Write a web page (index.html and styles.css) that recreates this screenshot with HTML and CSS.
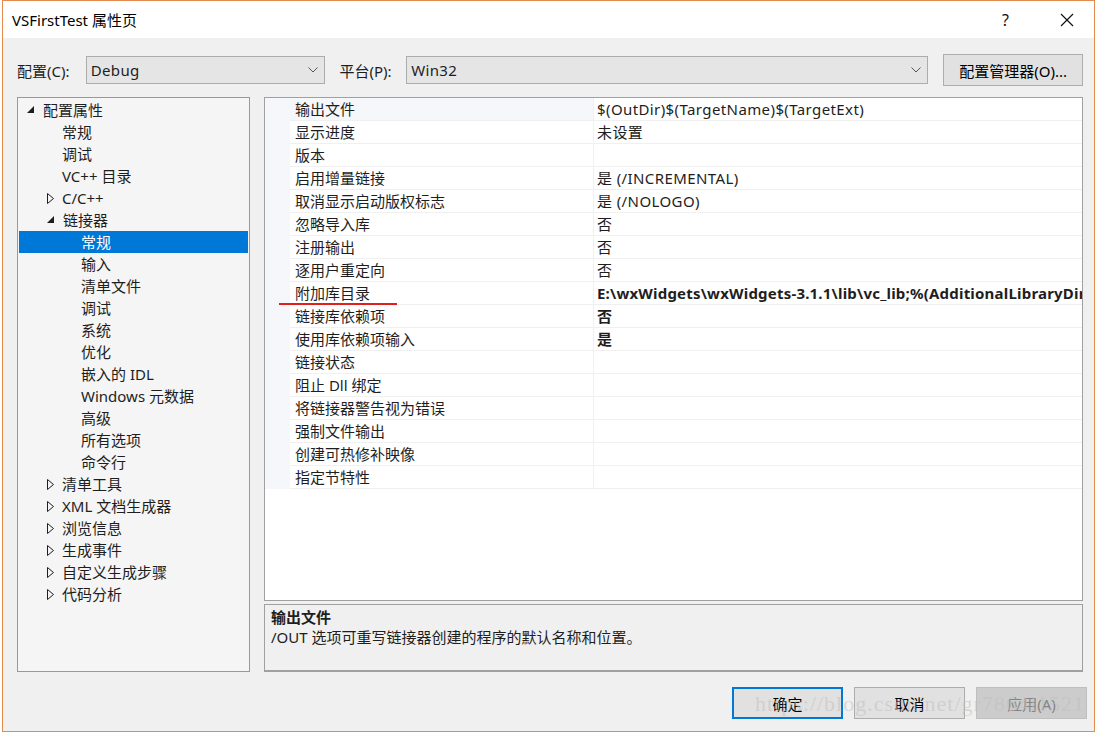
FILE: index.html
```html
<!DOCTYPE html>
<html lang="zh-CN">
<head>
  <meta charset="UTF-8">
  <title>VSFirstTest 属性页</title>
  <link rel="stylesheet" href="styles.css">
</head>
<body>
  <div class="window">
    <!-- Title bar -->
    <div class="titlebar">
      <span class="title">VSFirstTest 属性页</span>
      <span class="help">?</span>
      <span class="close">
        <svg width="14" height="14" viewBox="0 0 14 14"><path d="M1 1L13 13M13 1L1 13" stroke="#111" stroke-width="1.2" fill="none"/></svg>
      </span>
    </div>

    <div class="content">
      <!-- Configuration / platform -->
      <div class="toolbar">
        <span class="lbl lbl-config">配置(C):</span>
        <div class="combo combo-config">
          <span>Debug</span>
          <svg class="chev" width="10" height="6" viewBox="0 0 10 6"><path d="M0.5 0.5L5 5L9.5 0.5" stroke="#555" fill="none"/></svg>
        </div>
        <span class="lbl lbl-platform">平台(P):</span>
        <div class="combo combo-platform">
          <span>Win32</span>
          <svg class="chev" width="10" height="6" viewBox="0 0 10 6"><path d="M0.5 0.5L5 5L9.5 0.5" stroke="#555" fill="none"/></svg>
        </div>
        <button class="btn btn-manager">配置管理器(O)...</button>
      </div>

      <div class="main">
        <!-- Tree -->
        <div class="tree">
          <div class="node lvl0"><svg class="exp" width="8" height="8" viewBox="0 0 8 8"><path d="M7 0V7H0Z" fill="#1e1e1e"/></svg>配置属性</div>
          <div class="node lvl1">常规</div>
          <div class="node lvl1">调试</div>
          <div class="node lvl1">VC++ 目录</div>
          <div class="node lvl1 hasarrow"><svg class="col" width="8" height="11" viewBox="0 0 8 11"><path d="M0.5 0.5L6.5 5.5L0.5 10.5Z" stroke="#1e1e1e" fill="none"/></svg>C/C++</div>
          <div class="node lvl1 hasarrow"><svg class="exp" width="8" height="8" viewBox="0 0 8 8"><path d="M7 0V7H0Z" fill="#1e1e1e"/></svg>链接器</div>
          <div class="node lvl2 selected">常规</div>
          <div class="node lvl2">输入</div>
          <div class="node lvl2">清单文件</div>
          <div class="node lvl2">调试</div>
          <div class="node lvl2">系统</div>
          <div class="node lvl2">优化</div>
          <div class="node lvl2">嵌入的 IDL</div>
          <div class="node lvl2">Windows 元数据</div>
          <div class="node lvl2">高级</div>
          <div class="node lvl2">所有选项</div>
          <div class="node lvl2">命令行</div>
          <div class="node lvl1 hasarrow"><svg class="col" width="8" height="11" viewBox="0 0 8 11"><path d="M0.5 0.5L6.5 5.5L0.5 10.5Z" stroke="#1e1e1e" fill="none"/></svg>清单工具</div>
          <div class="node lvl1 hasarrow"><svg class="col" width="8" height="11" viewBox="0 0 8 11"><path d="M0.5 0.5L6.5 5.5L0.5 10.5Z" stroke="#1e1e1e" fill="none"/></svg>XML 文档生成器</div>
          <div class="node lvl1 hasarrow"><svg class="col" width="8" height="11" viewBox="0 0 8 11"><path d="M0.5 0.5L6.5 5.5L0.5 10.5Z" stroke="#1e1e1e" fill="none"/></svg>浏览信息</div>
          <div class="node lvl1 hasarrow"><svg class="col" width="8" height="11" viewBox="0 0 8 11"><path d="M0.5 0.5L6.5 5.5L0.5 10.5Z" stroke="#1e1e1e" fill="none"/></svg>生成事件</div>
          <div class="node lvl1 hasarrow"><svg class="col" width="8" height="11" viewBox="0 0 8 11"><path d="M0.5 0.5L6.5 5.5L0.5 10.5Z" stroke="#1e1e1e" fill="none"/></svg>自定义生成步骤</div>
          <div class="node lvl1 hasarrow"><svg class="col" width="8" height="11" viewBox="0 0 8 11"><path d="M0.5 0.5L6.5 5.5L0.5 10.5Z" stroke="#1e1e1e" fill="none"/></svg>代码分析</div>
        </div>

        <div class="right">
          <!-- Property grid -->
          <div class="grid">
            <div class="row first"><span class="gutter"></span><span class="name">输出文件</span><span class="val">$(OutDir)$(TargetName)$(TargetExt)</span></div>
            <div class="row"><span class="gutter"></span><span class="name">显示进度</span><span class="val">未设置</span></div>
            <div class="row"><span class="gutter"></span><span class="name">版本</span><span class="val"></span></div>
            <div class="row"><span class="gutter"></span><span class="name">启用增量链接</span><span class="val">是 (/INCREMENTAL)</span></div>
            <div class="row"><span class="gutter"></span><span class="name">取消显示启动版权标志</span><span class="val">是 (/NOLOGO)</span></div>
            <div class="row"><span class="gutter"></span><span class="name">忽略导入库</span><span class="val">否</span></div>
            <div class="row"><span class="gutter"></span><span class="name">注册输出</span><span class="val">否</span></div>
            <div class="row"><span class="gutter"></span><span class="name">逐用户重定向</span><span class="val">否</span></div>
            <div class="row"><span class="gutter"></span><span class="name marked">附加库目录</span><span class="val bold">E:\wxWidgets\wxWidgets-3.1.1\lib\vc_lib;%(AdditionalLibraryDirectories)</span></div>
            <div class="row"><span class="gutter"></span><span class="name">链接库依赖项</span><span class="val bold">否</span></div>
            <div class="row"><span class="gutter"></span><span class="name">使用库依赖项输入</span><span class="val bold">是</span></div>
            <div class="row"><span class="gutter"></span><span class="name">链接状态</span><span class="val"></span></div>
            <div class="row"><span class="gutter"></span><span class="name">阻止 Dll 绑定</span><span class="val"></span></div>
            <div class="row"><span class="gutter"></span><span class="name">将链接器警告视为错误</span><span class="val"></span></div>
            <div class="row"><span class="gutter"></span><span class="name">强制文件输出</span><span class="val"></span></div>
            <div class="row"><span class="gutter"></span><span class="name">创建可热修补映像</span><span class="val"></span></div>
            <div class="row"><span class="gutter"></span><span class="name">指定节特性</span><span class="val"></span></div>
          </div>

          <!-- Description -->
          <div class="desc">
            <div class="desc-title">输出文件</div>
            <div class="desc-text">/OUT 选项可重写链接器创建的程序的默认名称和位置。</div>
          </div>
        </div>
      </div>

      <div class="footer">
        <button class="btn btn-ok">确定</button>
        <button class="btn">取消</button>
        <button class="btn btn-disabled">应用(A)</button>
        <span class="watermark">https://blog.csdn.net/gr7864l1521</span>
      </div>
    </div>
  </div>
</body>
</html>
```

FILE: styles.css
```css
body {
  margin: 0;
  background: #ffffff;
  font-family: "Noto Sans", "Noto Sans CJK SC", sans-serif;
  font-size: 15px;
  color: #1e1e1e;
}
.window {
  margin-left: 2px;
  width: 1093px;
  height: 732px;
  box-sizing: border-box;
  border: 1px solid #e38b4f;
  background: #f0f0f0;
  display: flex;
  flex-direction: column;
}
.titlebar {
  height: 37px;
  background: #ffffff;
  display: flex;
  align-items: center;
  padding-left: 9px;
}
.title {
  flex: 1;
  font-size: 15px;
  color: #000;
}
.help {
  width: 20px;
  font-size: 16px;
  color: #111;
  margin-right: 38px;
}
.close {
  width: 14px;
  height: 14px;
  margin-right: 20px;
}
.close svg {
  display: block;
}
.content {
  flex: 1;
  padding: 0 11px 0 14px;
  position: relative;
}
.toolbar {
  display: flex;
  align-items: center;
  height: 32px;
  margin-top: 16px;
}
.lbl {
  display: inline-block;
}
.lbl-config {
  width: 69px;
}
.lbl-platform {
  width: 67px;
  margin-left: 14px;
}
.combo {
  height: 28px;
  box-sizing: border-box;
  border: 1px solid #acacac;
  background: #e5e5e5;
  display: flex;
  align-items: center;
  padding-left: 4px;
  padding-right: 6px;
  letter-spacing: 0.3px;
}
.combo span {
  flex: 1;
}
.combo-config {
  width: 240px;
}
.combo-platform {
  width: 523px;
}
.btn {
  font-family: inherit;
  font-size: 15px;
  color: #000;
  background: #e1e1e1;
  border: 1px solid #adadad;
  padding: 0;
  height: 32px;
  box-sizing: border-box;
}
.btn-manager {
  width: 140px;
  margin-left: 15px;
}
.main {
  display: flex;
  margin-top: 11px;
  gap: 14px;
}
.tree {
  width: 233px;
  height: 575px;
  box-sizing: border-box;
  border: 1px solid #999999;
  background: #f5f5f5;
  padding-top: 1px;
}
.node {
  height: 22px;
  line-height: 22px;
  display: flex;
  align-items: center;
  white-space: nowrap;
  margin: 0 1px;
}
.node svg {
  flex: none;
}
.lvl0 {
  padding-left: 8px;
}
.lvl0 .exp {
  margin-right: 8px;
}
.lvl1 {
  padding-left: 43px;
}
.lvl1.hasarrow {
  padding-left: 28px;
}
.hasarrow .exp {
  margin-right: 8px;
}
.hasarrow .col {
  margin-right: 7px;
}
.lvl2 {
  padding-left: 62px;
}
.selected {
  background: #0078d7;
  color: #ffffff;
}
.right {
  width: 819px;
  display: flex;
  flex-direction: column;
  gap: 3px;
}
.grid {
  height: 504px;
  box-sizing: border-box;
  border: 1px solid #a0a0a0;
  background: #ffffff;
}
.row {
  display: flex;
  height: 23px;
  line-height: 23px;
}
.gutter {
  width: 25px;
  flex: none;
  background: #f5f7fa;
}
.name {
  width: 304px;
  flex: none;
  box-sizing: border-box;
  padding-left: 5px;
  border-bottom: 1px solid #f0f0f0;
  border-right: 1px solid #f0f0f0;
  position: relative;
}
.first .name {
  background: #f5f7fa;
}
.val {
  flex: 1;
  padding-left: 3px;
  border-bottom: 1px solid #f0f0f0;
  white-space: nowrap;
  overflow: hidden;
  letter-spacing: 0.4px;
}
.bold {
  font-weight: bold;
  letter-spacing: 0.2px;
}
.marked::after {
  content: "";
  position: absolute;
  left: -11px;
  top: 21px;
  width: 118px;
  height: 2px;
  background: #e0201b;
}
.desc {
  height: 68px;
  box-sizing: border-box;
  border: 1px solid #a0a0a0;
  border-bottom-width: 2px;
  background: #f0f0f0;
  padding: 2px 6px;
}
.desc-title {
  font-weight: bold;
  line-height: 20px;
}
.desc-text {
  line-height: 20px;
}
.footer {
  display: flex;
  justify-content: flex-end;
  gap: 11px;
  margin-top: 15px;
  margin-right: -4px;
  position: relative;
}
.footer .btn {
  width: 111px;
}
.btn-ok {
  border: 2px solid #0078d7;
}
.btn-disabled {
  background: #cccccc;
  border-color: #bfbfbf;
  color: #838383;
}
.watermark {
  position: absolute;
  right: 2px;
  top: 4px;
  font-family: "Liberation Serif", serif;
  font-size: 22px;
  color: rgba(190, 190, 190, 0.5);
  letter-spacing: 1px;
  pointer-events: none;
}
```
